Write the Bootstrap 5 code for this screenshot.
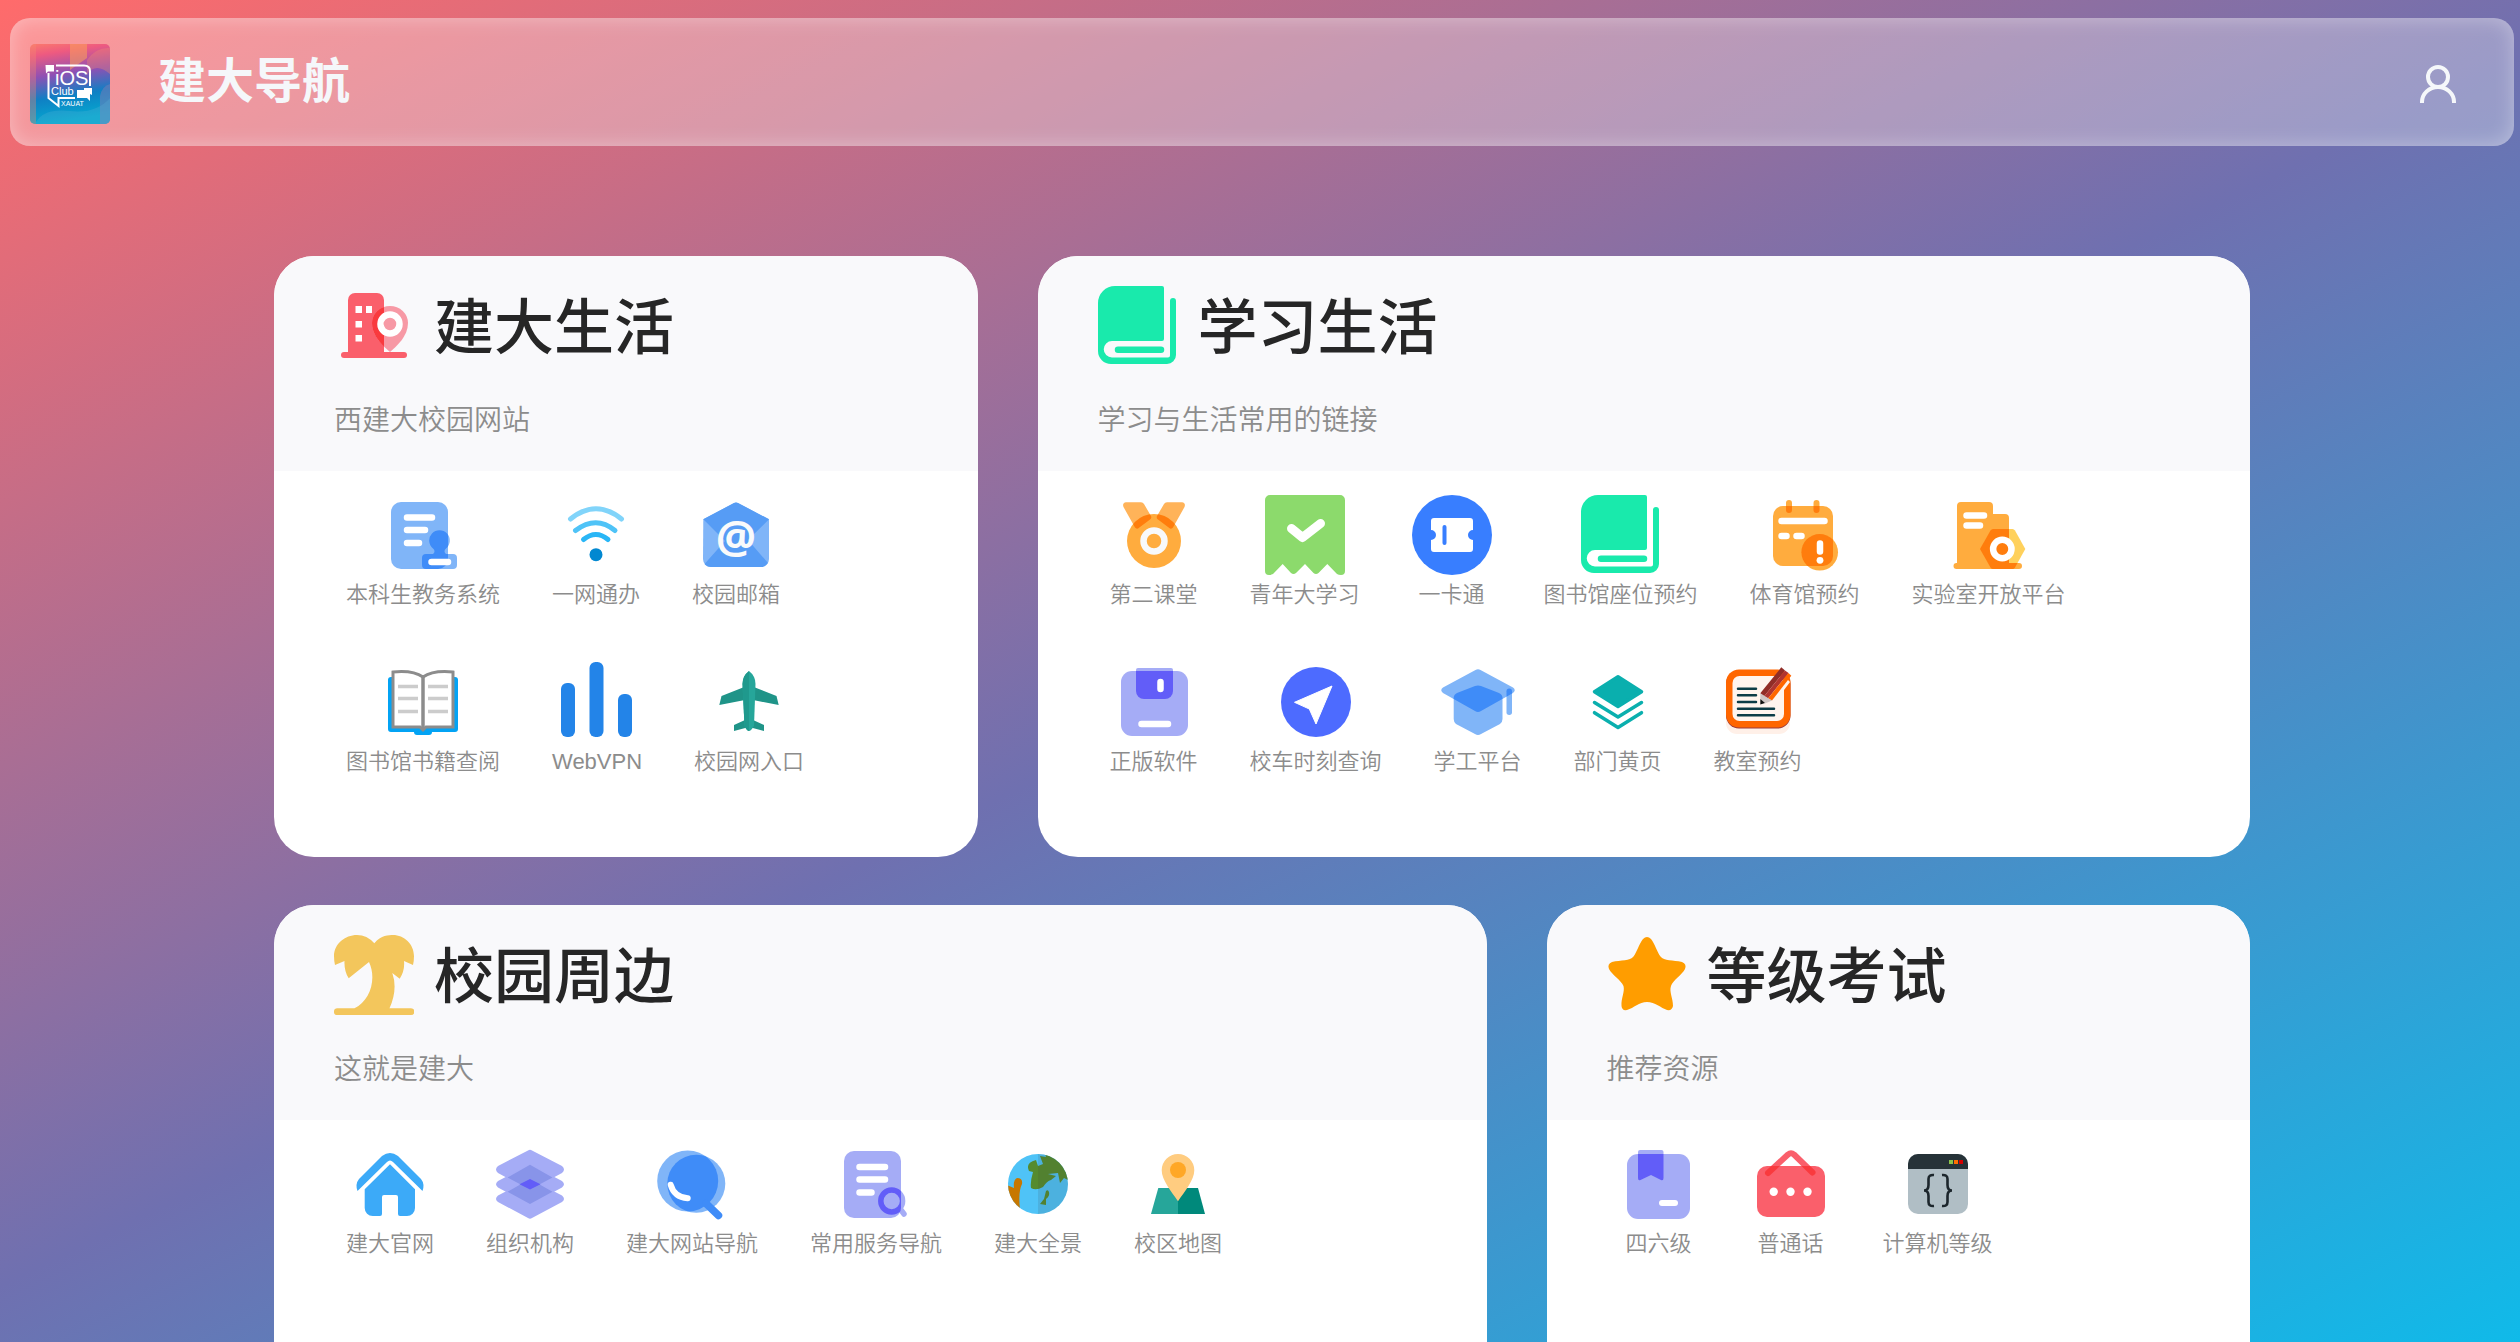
<!DOCTYPE html>
<html lang="zh-CN">
<head>
<meta charset="utf-8">
<meta name="viewport" content="width=device-width, initial-scale=1">
<title>建大导航</title>
<link href="https://cdn.jsdelivr.net/npm/bootstrap@5.3.0/dist/css/bootstrap.min.css" rel="stylesheet">
<style>
  body {
    font-family: "Liberation Sans", "Noto Sans CJK SC", sans-serif;
    color: #262626;
  }
  .page {
    background: linear-gradient(154deg, #ff6b6b, #6f70b0 50%, #10bae9);
    scrollbar-width: none;
  }
  .page::-webkit-scrollbar { display: none; }
  .topbar {
    margin: 18px 6px 0;
    padding: 26px 56px 22px 20px;
    border-radius: 20px;
    background: rgba(255, 255, 255, .3);
    box-shadow: inset 0 0 20px rgba(255, 255, 255, .35);
    color: #f5f7fa;
  }
  .brand { font-size: 48px; font-weight: 700; line-height: 76px; color: #f5f7fa; }
  .brand:hover { color: #fff; }
  .ico { width: 80px; height: 80px; flex: none; display: block; }
  .user-btn svg { width: 40px; height: 40px; display: block; }
  .board { padding: 110px 24px 48px; }
  .board > .row { --bs-gutter-x: 60px; --bs-gutter-y: 48px; }
  .panel { min-height: 600px; border-radius: 40px; }
  .panel-head { height: 215px; padding: 30px 60px; background: #f9f9fb; }
  .panel-title { gap: 20px; }
  .panel-head h2 { font-size: 60px; font-weight: 500; line-height: 86px; }
  .panel-head p { margin-top: 30px; font-size: 28px; font-weight: 350; line-height: 38px; color: #8c8c8c; }
  .links { padding: 24px 60px 76px 72px; gap: 48px 52px; }
  .links a { min-width: 80px; font-size: 22px; font-weight: 350; line-height: 39px; color: #8c8c8c; }
  .links a:hover { color: #262626; }
  @media (min-width: 1400px) {
    .board { padding-left: 270px; padding-right: 270px; }
    .col-narrow { flex: 0 0 auto; width: 37.5%; }
    .col-wide { flex: 0 0 auto; width: 62.5%; }
  }
</style>
</head>
<body>
<svg width="0" height="0" class="position-absolute" aria-hidden="true">
  <defs>
    <linearGradient id="logoBg" x1="0" y1="0" x2=".15" y2="1">
      <stop offset="0" stop-color="#fb7a6c"/><stop offset=".15" stop-color="#ee5a80"/><stop offset=".42" stop-color="#8f50b4"/><stop offset=".7" stop-color="#0f80c4"/><stop offset="1" stop-color="#05a8cf"/>
    </linearGradient>
    <clipPath id="logoClip"><rect width="80" height="80" rx="5"/></clipPath>
    <clipPath id="towerClip"><rect x="14" y="7" width="36" height="60"/></clipPath>
    <clipPath id="docClip"><rect x="8" y="7" width="57" height="67" rx="10"/></clipPath>
    <clipPath id="medalClip"><circle cx="40" cy="46" r="27"/></clipPath>
    <clipPath id="calClip"><rect x="8" y="11" width="60" height="60" rx="10"/></clipPath>
    <clipPath id="labClip"><path d="M8 68V11a4 4 0 0 1 4-4h28a4 4 0 0 1 4 4v8h12a4 4 0 0 1 4 4v45h10a3 3 0 0 1 0 6H8z"/></clipPath>
    <clipPath id="diskClip"><rect x="7" y="9" width="67" height="65" rx="11"/></clipPath>
    <clipPath id="capClip"><path d="M37.500 8Q40 6.500 42.500 8L75 25.500Q78.500 28 75 31L43 49Q40 51 37 49L5 31Q1.500 28 5 25.500z"/></clipPath>
    <clipPath id="lensClip"><circle cx="35.700" cy="37" r="30.500"/></clipPath>
    <clipPath id="earthClip"><circle cx="40" cy="40" r="30"/></clipPath>
    <clipPath id="noteClip"><rect x="8" y="10" width="63" height="65" rx="11"/></clipPath>
    <clipPath id="bagClip"><rect x="6" y="22" width="68" height="51" rx="10"/></clipPath>
    <symbol id="book" viewBox="0 0 80 80"><path fill="#19eaac" d="M17 0H64a2 2 0 0 1 2 2V53a2 2 0 0 1-2 2H14a8 8 0 0 0 0 16.500H70a2 2 0 0 0 2-2V15a3 3 0 0 1 6 0V69a9 9 0 0 1-9 9H13A13 13 0 0 1 0 65V17A17 17 0 0 1 17 0zM20 60.500H63a3.200 3.200 0 0 1 0 6.500H20a3.200 3.200 0 0 1 0-6.500z"/></symbol>
  </defs>
</svg>

<div class="page vh-100 overflow-auto ps-1">
  <nav class="topbar d-flex align-items-center justify-content-between">
    <a class="brand d-flex align-items-start gap-5 text-decoration-none" href="#">
      <svg class="ico" viewBox="0 0 80 80" aria-hidden="true">
        <g clip-path="url(#logoClip)">
          <rect width="80" height="80" fill="url(#logoBg)"/>
          <path fill="#f9a35a" opacity=".55" d="M40 0H57V14L40 26z"/>
          <path fill="#f48a70" opacity=".35" d="M0 0H6V80H0zM57 16Q66 3 80 4V30Q66 18 57 30z"/>
          <path fill="#7d7bb5" opacity=".5" d="M70 80V52Q72 42 80 40V80z"/>
          <path fill="#5fb4d8" opacity=".25" d="M6 78Q14 64 40 67T80 54V80H6z"/>
        </g>
        <g fill="none" stroke="#fff" stroke-width="2"><path d="M26 21.500H54Q60 21.500 60 27V42M18.500 29V54L28.500 62V54H45"/></g>
        <path fill="#fff" d="M15.500 21h8.500v6.500h-6l-2 2zM54 44h8v7l-2-1v7l-3-3h-10V46h7z"/>
        <g fill="#fff" font-family="Liberation Sans" font-weight="400"><text x="25" y="41" font-size="20">iOS</text><text x="21" y="51" font-size="11">Club</text><text x="31" y="62" font-size="7">XAUAT</text></g>
      </svg>
      <span>建大导航</span>
    </a>
    <button class="user-btn btn border-0 p-0" type="button" aria-label="用户">
      <svg viewBox="0 0 40 40" fill="none" stroke="#f5f7fa" stroke-width="4"><circle cx="20" cy="13" r="10"/><path d="M4 39V38a16 15 0 0 1 32 0V39"/></svg>
    </button>
  </nav>

  <main class="board">
    <div class="row">
      <div class="col-12 col-narrow">
        <section class="panel card border-0 overflow-hidden h-100">
          <header class="panel-head">
            <div class="panel-title d-flex align-items-start">
              <svg class="ico" viewBox="0 0 80 80">
                <path fill="#fa5f6b" d="M14 67V14a7 7 0 0 1 7-7H43a7 7 0 0 1 7 7V67z"/>
                <path fill="#f799a5" d="M56 66C49 60 38 50 38 37a18 17 0 0 1 36 0C74 50 63 60 56 66z"/>
                <path clip-path="url(#towerClip)" fill="#f93a3e" d="M56 66C49 60 38 50 38 37a18 17 0 0 1 36 0C74 50 63 60 56 66z"/>
                <rect x="7" y="66" width="66" height="6" rx="3" fill="#fa5f6b"/>
                <path fill="#fff" d="M21.500 20h6.500v7h-6.500zM32 20h6v7h-6zM21.500 35h6.500v6.500h-6.500zM21.500 49h6.500v6.500h-6.500z"/>
                <circle cx="56" cy="38" r="9.500" fill="none" stroke="#fff" stroke-width="6.500"/>
              </svg>
              <h2 class="mb-0">建大生活</h2>
            </div>
            <p class="mb-0">西建大校园网站</p>
          </header>
          <div class="links d-flex flex-wrap">
            <a class="d-flex flex-column align-items-center text-decoration-none" href="#">
              <svg class="ico" viewBox="0 0 80 80">
                <rect x="8" y="7" width="57" height="67" rx="10" fill="#80b5f8"/>
                <path fill="#80b5f8" d="M50 59Q53 56 50 53.500A10.300 10.300 0 1 1 63 53.500Q60 56 63 59H70a4 4 0 0 1 4 4v7a4 4 0 0 1-4 4H43a4 4 0 0 1-4-4v-7a4 4 0 0 1 4-4z"/>
                <path clip-path="url(#docClip)" fill="#3f8cf8" d="M50 59Q53 56 50 53.500A10.300 10.300 0 1 1 63 53.500Q60 56 63 59H70a4 4 0 0 1 4 4v7a4 4 0 0 1-4 4H43a4 4 0 0 1-4-4v-7a4 4 0 0 1 4-4z"/>
                <path stroke="#fff" stroke-width="6.500" stroke-linecap="round" d="M24 22.500H49M24 35H42M24 48H36M48.500 67H65"/>
              </svg><span>本科生教务系统</span></a>
            <a class="d-flex flex-column align-items-center text-decoration-none" href="#">
              <svg class="ico" viewBox="0 0 80 80" fill="none" stroke-width="5" stroke-linecap="round">
                <path stroke="#81d4fa" d="M14.500 24Q40 3.500 65.500 24"/><path stroke="#4fc3f7" d="M19.500 35.500Q40 20 59 35.500"/><path stroke="#29b6f6" d="M27.500 44.500Q40 34.500 52 44.500"/><circle cx="40" cy="59.700" r="6.500" fill="#0288d1"/>
              </svg><span>一网通办</span></a>
            <a class="d-flex flex-column align-items-center text-decoration-none" href="#">
              <svg class="ico" viewBox="0 0 80 80">
                <path fill="#80b5f8" d="M7.300 24.300L38 8Q40 7 42 8L73 24.300V64a8 8 0 0 1-8 8H15a8 8 0 0 1-8-8z"/>
                <path fill="#569cf5" d="M7.300 24.300L38 8Q40 7 42 8L73 24.300L52 45L72 68Q69 72 65 72H15Q11 72 8.500 69L29 46z"/>
                <text x="40" y="58" text-anchor="middle" font-family="Open Sans" font-weight="700" font-size="45" fill="#f9fafb">@</text>
              </svg><span>校园邮箱</span></a>
            <a class="d-flex flex-column align-items-center text-decoration-none" href="#">
              <svg class="ico" viewBox="0 0 80 80">
                <path fill="#03a3f4" d="M8 15H72a3 3 0 0 1 3 3V67a3 3 0 0 1-3 3H49Q49 73 46 73H34Q31 73 31 70H8a3 3 0 0 1-3-3V18a3 3 0 0 1 3-3z"/>
                <path fill="#fff" stroke="#8c8c8c" stroke-width="3" d="M10 10Q30 8 40 15Q50 8 70 10V65H43L40 68L37 65H10z"/><path stroke="#8c8c8c" stroke-width="3.500" d="M40 15V67"/>
                <path stroke="#ccc" stroke-width="3.500" d="M15 24.500H35M45 24.500H65M15 36.500H35M45 36.500H65M15 49.500H35M45 49.500H65"/>
              </svg><span>图书馆书籍查阅</span></a>
            <a class="d-flex flex-column align-items-center text-decoration-none" href="#">
              <svg class="ico" viewBox="0 0 80 80" fill="#2384e8"><rect x="4" y="21" width="14" height="54" rx="6"/><rect x="32.500" width="14" height="75" rx="6"/><rect x="61" y="32" width="14" height="43" rx="6"/></svg><span>WebVPN</span></a>
            <a class="d-flex flex-column align-items-center text-decoration-none" href="#">
              <svg class="ico" viewBox="0 0 80 80">
                <path fill="#1f9488" d="M34 25.500L12.500 34L10.300 43L36 38V58L25 63V69L40 65L55 69V63L44 58V38L69.700 43L67.500 34L46 25.500z"/>
                <path fill="#26a69a" d="M40 9Q46.500 14 46.500 22L45 64Q42 69 40 69Q38 69 35.500 64L33.500 22Q33.500 14 40 9z"/><path fill="#1f998d" d="M40 9Q33.500 14 33.500 22L35.500 64Q38 69 40 69z"/>
              </svg><span>校园网入口</span></a>
          </div>
        </section>
      </div>

      <div class="col-12 col-wide">
        <section class="panel card border-0 overflow-hidden h-100">
          <header class="panel-head">
            <div class="panel-title d-flex align-items-start">
              <svg class="ico"><use href="#book"/></svg>
              <h2 class="mb-0">学习生活</h2>
            </div>
            <p class="mb-0">学习与生活常用的链接</p>
          </header>
          <div class="links d-flex flex-wrap">
            <a class="d-flex flex-column align-items-center text-decoration-none" href="#">
              <svg class="ico" viewBox="0 0 80 80">
                <path fill="#ffb359" d="M12 7.300H27Q29 7.300 30 9L37 21Q38 23 36 24.500L24 33.500Q22 34 21 32.500L9.500 12Q8 8 12 7.300zM68 7.300H53Q51 7.300 50 9L43 21Q42 23 44 24.500L56 33.500Q58 34 59 32.500L70.500 12Q72 8 68 7.300z"/>
                <circle cx="40" cy="46" r="27" fill="#ffac3e"/>
                <path clip-path="url(#medalClip)" fill="#ff7d0d" d="M28 7L37 21Q38 23 36 24.500L24 33.500Q22 34 21 32.500L9.500 12zM52 7L43 21Q42 23 44 24.500L56 33.500Q58 34 59 32.500L70.500 12z"/>
                <circle cx="40" cy="46" r="10.500" fill="none" stroke="#f8f9fa" stroke-width="6.500"/>
              </svg><span>第二课堂</span></a>
            <a class="d-flex flex-column align-items-center text-decoration-none" href="#">
              <svg class="ico" viewBox="0 0 80 80">
                <path fill="#8cda6c" d="M5 0H75a5 5 0 0 1 5 5V76Q80 80 76 80Q73.500 80 72 79L62.300 69L53.500 78Q51 80 48.500 78L40 69L31 78Q28.500 80 26 78L17.700 69L8 79Q6 80 4 80Q0 80 0 76V5a5 5 0 0 1 5-5z"/>
                <path fill="none" stroke="#fff" stroke-width="9" stroke-linecap="round" stroke-linejoin="round" d="M26.500 33.500L37.500 42.500L55.500 28.500"/>
              </svg><span>青年大学习</span></a>
            <a class="d-flex flex-column align-items-center text-decoration-none" href="#">
              <svg class="ico" viewBox="0 0 80 80"><circle cx="40" cy="40" r="40" fill="#387eff"/>
                <path fill="#fff" d="M22 23H58a3 3 0 0 1 3 3V35a5 5 0 0 0 0 10V54a3 3 0 0 1-3 3H22a3 3 0 0 1-3-3V45a5 5 0 0 0 0-10V26a3 3 0 0 1 3-3z"/><rect x="30.500" y="30" width="4" height="20" rx="2" fill="#387eff"/>
              </svg><span>一卡通</span></a>
            <a class="d-flex flex-column align-items-center text-decoration-none" href="#">
              <svg class="ico"><use href="#book"/></svg><span>图书馆座位预约</span></a>
            <a class="d-flex flex-column align-items-center text-decoration-none" href="#">
              <svg class="ico" viewBox="0 0 80 80">
                <circle cx="54.700" cy="57.300" r="18.300" fill="#ffac3e"/><rect x="8" y="11" width="60" height="60" rx="10" fill="#ffac3e"/>
                <path stroke="#ffac3e" stroke-width="6" stroke-linecap="round" d="M24 8V15M51.500 8V15"/>
                <g clip-path="url(#calClip)"><circle cx="54.700" cy="57.300" r="18.300" fill="#ff7d0d"/><path stroke="#ff7d0d" stroke-width="6" stroke-linecap="round" d="M24 8V15M51.500 8V15"/></g>
                <path stroke="#fff" stroke-width="6.500" stroke-linecap="round" d="M16.500 26H59.500M16.500 41H21.500M31.500 41H36.500M55 48.500V56.500"/><circle cx="55" cy="65.300" r="3.400" fill="#fff"/>
              </svg><span>体育馆预约</span></a>
            <a class="d-flex flex-column align-items-center text-decoration-none" href="#">
              <svg class="ico" viewBox="0 0 80 80">
                <path fill="#ffd15c" d="M44 34H63.500Q65 34 66 35.500L76.300 54L66 72.500Q65 74 63.500 74H44Q42.500 74 41.500 72.500L31 54L41.500 35.500Q42.500 34 44 34z"/>
                <path fill="#ffac3e" d="M8 68V11a4 4 0 0 1 4-4h28a4 4 0 0 1 4 4v8h12a4 4 0 0 1 4 4v45h10a3 3 0 0 1 0 6H7.500a3 3 0 0 1 0-6z"/>
                <path clip-path="url(#labClip)" fill="#ff7d0d" d="M44 34H63.500Q65 34 66 35.500L76.300 54L66 72.500Q65 74 63.500 74H44Q42.500 74 41.500 72.500L31 54L41.500 35.500Q42.500 34 44 34z"/>
                <path stroke="#fff" stroke-width="6.500" stroke-linecap="round" d="M17.500 20.500H35M17.500 30.500H31"/><circle cx="53.300" cy="54" r="9.200" fill="#ff7d0d" stroke="#fff" stroke-width="6.500"/>
              </svg><span>实验室开放平台</span></a>
            <a class="d-flex flex-column align-items-center text-decoration-none" href="#">
              <svg class="ico" viewBox="0 0 80 80">
                <rect x="7" y="9" width="67" height="65" rx="11" fill="#a5acf6"/><path fill="#a5acf6" d="M22 8Q22 6 24 6H57Q59 6 59 8V12H22z"/>
                <path clip-path="url(#diskClip)" fill="#625df8" d="M22 6H59V29a8 8 0 0 1-8 8H30a8 8 0 0 1-8-8z"/>
                <path stroke="#fff" stroke-width="6.500" stroke-linecap="round" d="M46.500 20V27M27.500 62H54"/>
              </svg><span>正版软件</span></a>
            <a class="d-flex flex-column align-items-center text-decoration-none" href="#">
              <svg class="ico" viewBox="0 0 80 80"><circle cx="40" cy="40" r="35" fill="#4d6bff"/><path fill="#fff" stroke="#fff" stroke-linejoin="round" d="M56 24L18.500 40.300L33.300 47L40 62z"/></svg><span>校车时刻查询</span></a>
            <a class="d-flex flex-column align-items-center text-decoration-none" href="#">
              <svg class="ico" viewBox="0 0 80 80">
                <path fill="#80b5f8" d="M37.500 8Q40 6.500 42.500 8L75 25.500Q78.500 28 75 31L43 49Q40 51 37 49L5 31Q1.500 28 5 25.500z"/>
                <path fill="#80b5f8" d="M37 24Q40 23 43 24L61 31Q64.500 32.500 64.500 36V57Q64.500 60 62 62L43 72Q40 74 37 72L18 62Q15.700 60 15.700 57V36Q15.700 32.500 19 31z"/><rect x="68.500" y="26.500" width="5.500" height="26.500" rx="2.700" fill="#80b5f8"/>
                <g clip-path="url(#capClip)" fill="#3f8cf8"><path d="M37 24Q40 23 43 24L61 31Q64.500 32.500 64.500 36V57H15.700V36Q15.700 32.500 19 31z"/><rect x="68.500" y="26.500" width="5.500" height="26.500" rx="2.700"/></g>
              </svg><span>学工平台</span></a>
            <a class="d-flex flex-column align-items-center text-decoration-none" href="#">
              <svg class="ico" viewBox="0 0 80 80" fill="none" stroke="#0aafae" stroke-width="3.500" stroke-linecap="round" stroke-linejoin="round"><path fill="#0aafae" d="M40 14.800L63.500 29.700L40 44.500L16.500 29.700z"/><path d="M16.500 40.500L40 55L63.500 40.500M16.500 50.700L40 65.500L63.500 50.700"/></svg><span>部门黄页</span></a>
            <a class="d-flex flex-column align-items-center text-decoration-none" href="#">
              <svg class="ico" viewBox="0 0 80 80">
                <rect x="8" y="14" width="64" height="58" rx="11" fill="#fff0e8"/><rect x="8" y="9" width="64.500" height="57.500" rx="13" fill="#9a3a3a"/><rect x="8" y="7.500" width="64.500" height="58" rx="13" fill="#f60"/><rect x="14.500" y="14" width="51.500" height="45" rx="7" fill="#fff4ee"/>
                <path stroke="#0c3c47" stroke-width="2.500" stroke-linecap="round" d="M20 26.700H38M20 33.300H38M20 40H38M20 46.700H56M20 53.300H56"/>
                <path fill="#fff4ee" d="M56 39L69 17L72 20L57 40z"/><path fill="#912d27" d="M42.300 31.300L63.300 5.300L67 8.500L46 34.500z"/><path fill="#b03530" d="M46 34.500L67 8.500L70.500 11L50 36.500z"/><path fill="#f60" d="M50 36.500L70.500 11L73.300 13.700L54 38.500z"/><path fill="#cfc6c4" d="M42.300 31.300L54 38.500L47 41.500L42.300 37z"/><path fill="#111" d="M42.300 37L47 41L42.300 42.500z"/>
              </svg><span>教室预约</span></a>
          </div>
        </section>
      </div>

      <div class="col-12 col-wide">
        <section class="panel card border-0 overflow-hidden h-100">
          <header class="panel-head">
            <div class="panel-title d-flex align-items-start">
              <svg class="ico" viewBox="0 0 80 80" fill="#f3c65c"><path d="M40.300 8.300C47 0 55 0 59 0C70 0 80 9 80 21Q80 26 79 30L70 26Q71 36 65.700 43.700L58.300 38Q64 54 55.500 73.300H77a3.300 3.300 0 0 1 0 6.700H3.300a3.300 3.300 0 0 1 0-6.700H20.500C36 66 43 44 35 27L14.700 43.300Q10 36 10.500 26L1 30Q0 26 0 21C0 9 11 0 23 0Q33 0 40.300 8.300z"/></svg>
              <h2 class="mb-0">校园周边</h2>
            </div>
            <p class="mb-0">这就是建大</p>
          </header>
          <div class="links d-flex flex-wrap">
            <a class="d-flex flex-column align-items-center text-decoration-none" href="#">
              <svg class="ico" viewBox="0 0 80 80" fill="#3caaf8"><path d="M40 20.300L65 45.300V64a8 8 0 0 1-8 8H50a2 2 0 0 1-2-2V53a2 2 0 0 0-2-2H34a2 2 0 0 0-2 2V70a2 2 0 0 1-2 2H22.700a8 8 0 0 1-8-8V45.300z"/><path d="M32 12Q40 6 48 12L71 35Q75 40 72.500 47L43 18Q40 15 37 18L7.500 47Q5 40 9 35z"/></svg><span>建大官网</span></a>
            <a class="d-flex flex-column align-items-center text-decoration-none" href="#">
              <svg class="ico" viewBox="0 0 80 80"><g fill="#a5acf6"><path d="M38 6.500Q40 5 42 6.500L72 22Q76 25.500 72 29L42 45Q40 46 38 45L8 29Q4 25.500 8 22z"/><path d="M38 21.300Q40 20 42 21.300L72 37Q76 40.300 72 43.500L42 59.500Q40 60.500 38 59.500L8 43.500Q4 40.300 8 37z"/><path d="M38 36Q40 34.500 42 36L72 51.500Q76 55 72 58L42 74Q40 75.500 38 74L8 58Q4 55 8 51.500z"/></g>
              <path fill="#8894e9" d="M40 20.700L62.500 33.500L40 45.500L17.500 33.500zM40 35L62.500 47.700L40 60L17.500 47.700z"/><path fill="#625df8" d="M40 35L50.500 40.300L40 45.500L29.500 40.300z"/></svg><span>组织机构</span></a>
            <a class="d-flex flex-column align-items-center text-decoration-none" href="#">
              <svg class="ico" viewBox="0 0 80 80"><circle cx="35.700" cy="37" r="30.500" fill="#80b5f8"/><circle cx="44.300" cy="39.700" r="29" fill="#80b5f8"/><circle cx="44.300" cy="39.700" r="29" fill="#3f8cf8" clip-path="url(#lensClip)"/><path fill="none" stroke="#3f8cf8" stroke-width="7.500" stroke-linecap="round" d="M54 59.500L66.500 71.500"/><path fill="none" stroke="#fff" stroke-width="6" stroke-linecap="round" d="M18.700 40.700Q22 53 35.700 54.300"/></svg><span>建大网站导航</span></a>
            <a class="d-flex flex-column align-items-center text-decoration-none" href="#">
              <svg class="ico" viewBox="0 0 80 80"><rect x="8" y="7" width="57" height="67" rx="10" fill="#a5acf6"/><circle cx="55.700" cy="57" r="10.900" fill="none" stroke="#a5acf6" stroke-width="5.500"/><path stroke="#a5acf6" stroke-width="5.500" stroke-linecap="round" d="M65 66L68 70"/><circle cx="55.700" cy="57" r="10.900" fill="none" stroke="#625df8" stroke-width="5.500" clip-path="url(#docClip)"/><path stroke="#fff" stroke-width="6.500" stroke-linecap="round" d="M23.500 23H49M23.500 35.500H49M23.500 48.500H35.500"/></svg><span>常用服务导航</span></a>
            <a class="d-flex flex-column align-items-center text-decoration-none" href="#">
              <svg class="ico" viewBox="0 0 80 80"><g clip-path="url(#earthClip)"><rect width="80" height="80" fill="#4fc3f7"/><path fill="#c77700" d="M9 41L16 44Q15 36 19 34Q25 34 24 40Q20 48 22 65L16 66L6 50z"/><path fill="#558b2f" d="M38 16Q27 19 31 27L35 28Q32 38 33 44Q38 47 45 43Q49 37 53 36L58 32L50 30L60 29L62 39L66 34L74 38V5H46L48 13L42 12L45 20L40 22z"/><path fill="#558b2f" d="M48 47Q50 45 51 48Q52 52 48 55V61L42 60L46 55z"/><rect x="40" width="40" height="80" fill="#3a3a3a" opacity=".13"/></g></svg><span>建大全景</span></a>
            <a class="d-flex flex-column align-items-center text-decoration-none" href="#">
              <svg class="ico" viewBox="0 0 80 80"><path fill="#26a69a" d="M20.300 44H40V70H13z"/><path fill="#00897b" d="M40 44H60L67 70H40z"/><path fill="#ffcc80" d="M40 57.300C33 47 23.700 36 23.700 26.300a16.300 16.300 0 0 1 32.600 0C56.300 36 47 47 40 57.300z"/><circle cx="40" cy="26" r="8" fill="#ffa726"/></svg><span>校区地图</span></a>
          </div>
        </section>
      </div>

      <div class="col-12 col-narrow">
        <section class="panel card border-0 overflow-hidden h-100">
          <header class="panel-head">
            <div class="panel-title d-flex align-items-start">
              <svg class="ico" viewBox="0 0 80 80" fill="#ff9d00"><path d="M36 4Q40 0 44 4C48 9 50 17 53.500 21.500C57 26 66 25 75 27Q80 29 78 34C75 40 66 45 64 51C62 57 66 63 66 71Q65 76 60 75C54 73 48 67 40 67C32 67 27 73 20 75Q15 76 14.500 71C14 63 18 57 16.500 51C14 45 5 40 2 34Q0 29 5 27C14 25 23 26 26.500 21.500C30 17 32 9 36 4z"/></svg>
              <h2 class="mb-0">等级考试</h2>
            </div>
            <p class="mb-0">推荐资源</p>
          </header>
          <div class="links d-flex flex-wrap">
            <a class="d-flex flex-column align-items-center text-decoration-none" href="#">
              <svg class="ico" viewBox="0 0 80 80"><rect x="8" y="10" width="63" height="65" rx="11" fill="#a5acf6"/><path fill="#a5acf6" d="M19 8Q19 6 21 6H42.500Q44.500 6 44.500 8V12H19z"/><path clip-path="url(#noteClip)" fill="#625df8" d="M19 6H44.500V34Q44.500 37 42 36L32 31L21.500 36Q19 37 19 34z"/><path stroke="#fff" stroke-width="6" stroke-linecap="round" d="M43 59H56"/></svg><span>四六级</span></a>
            <a class="d-flex flex-column align-items-center text-decoration-none" href="#">
              <svg class="ico" viewBox="0 0 80 80"><rect x="6" y="22" width="68" height="51" rx="10" fill="#fa5f6b"/><path fill="none" stroke="#fa5f6b" stroke-width="6" stroke-linecap="round" stroke-linejoin="round" d="M17 29L37 10.500Q40 8 43 10.500L61.500 28.500"/><path clip-path="url(#bagClip)" fill="none" stroke="#f93a3e" stroke-width="6" stroke-linecap="round" d="M17 29L37 10.500Q40 8 43 10.500L61.500 28.500"/><g fill="#fff"><circle cx="22.700" cy="47.700" r="4.200"/><circle cx="39.500" cy="47.700" r="4.200"/><circle cx="56.500" cy="47.700" r="4.200"/></g></svg><span>普通话</span></a>
            <a class="d-flex flex-column align-items-center text-decoration-none" href="#">
              <svg class="ico" viewBox="0 0 80 80"><rect x="10" y="10" width="60" height="60" rx="10" fill="#b0bec5"/><path fill="#263238" d="M10 25V20A10 10 0 0 1 20 10H60A10 10 0 0 1 70 20V25z"/><path fill="#8bc34a" d="M51 16h4v4h-4z"/><path fill="#ff6f00" d="M56 16h4v4h-4z"/><path fill="#d50000" d="M61 16h4v4h-4z"/><g fill="none" stroke="#1c262c" stroke-width="2.600"><path d="M36 31Q30.500 30.500 30.500 35V41Q30.500 46.500 26 46.500Q30.500 46.500 30.500 52V58Q30.500 62.500 36 62"/><path d="M44 31Q49.500 30.500 49.500 35V41Q49.500 46.500 54 46.500Q49.500 46.500 49.500 52V58Q49.500 62.500 44 62"/></g></svg><span>计算机等级</span></a>
          </div>
        </section>
      </div>
    </div>
  </main>
</div>
<script src="https://cdn.jsdelivr.net/npm/bootstrap@5.3.0/dist/js/bootstrap.bundle.min.js"></script>
</body>
</html>
